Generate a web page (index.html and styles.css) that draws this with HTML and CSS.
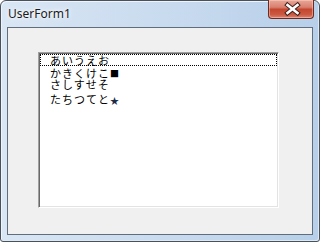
FILE: index.html
```html
<!DOCTYPE html>
<html lang="ja">
<head>
    <meta charset="UTF-8">
    <meta name="viewport" content="width=device-width, initial-scale=1.0">
    <title>UserForm1</title>

    <link rel="stylesheet" href="styles.css">
</head>
<body>
    <div class="window">
        <div class="titlebar">
            <span class="title">UserForm1</span>
            <button class="close" aria-label="Close">
                <svg width="46" height="19" viewBox="0 0 46 19">
                    <path d="M19.5 6 L29.5 14 M29.5 6 L19.5 14" stroke="#40201c" stroke-width="4.6" stroke-linecap="square" fill="none"/>
                    <path d="M19.5 6 L29.5 14 M29.5 6 L19.5 14" stroke="#fff" stroke-width="2.6" stroke-linecap="square" fill="none"/>
                </svg>
            </button>
        </div>

        <div class="client">
            <div class="listbox">
                <div class="item focused">あいうえお</div>
                <div class="item double">かきくけこ<span class="mark">■</span><br>さしすせそ</div>
                <div class="item">たちつてと<span class="star">★</span></div>
            </div>
        </div>
    </div>
</body>
</html>
```

FILE: styles.css
```css
* {
    box-sizing: border-box;
}

body {
    margin: 0;
    background: #fff;
}

.window {
    width: 320px;
    height: 242px;
    display: flex;
    flex-direction: column;
    padding: 0 6px 6px;
    border: 1px solid #4b5159;
    border-radius: 6px 6px 3px 3px;
    background: linear-gradient(to right, #d9e6f4, #c6d9ee 60%, #b7cfe9);
    box-shadow: inset 1px 1px #eef4fb, inset -1px -1px #dbe8f5;
}

.titlebar {
    height: 26px;
    flex: none;
    display: flex;
    justify-content: space-between;
    align-items: flex-start;
    padding-left: 1px;
    margin-right: -1px;
}

.title {
    font-family: "Noto Sans", sans-serif;
    font-size: 12px;
    line-height: 16px;
    margin-top: 5px;
    color: #1b1b1b;
    text-shadow: 0 0 6px #fff, 0 0 3px #fff;
}

.close {
    width: 46px;
    height: 19px;
    margin-top: -1px;
    padding: 0;
    border: 1px solid #6b2b22;
    border-top: none;
    border-radius: 0 0 4px 4px;
    background: linear-gradient(#e9a796, #d98070 40%, #c4472f 52%, #cb5840 80%, #dd8270);
    box-shadow: inset 0 0 0 1px rgba(255, 220, 210, 0.45);
    cursor: pointer;
}

.close svg {
    display: block;
    margin: -1px 0 0 -1px;
}

.client {
    flex: 1;
    display: flex;
    padding: 24px 33px 26px 30px;
    border: 1px solid #616d7a;
    background: #f0f0f0;
}

.listbox {
    flex: 1;
    background: #fff;
    border-top: 1px solid #a0a0a0;
    border-left: 1px solid #a0a0a0;
    border-bottom: 1px solid #fff;
    border-right: 1px solid #fff;
    box-shadow: inset 1px 1px #696969, inset -1px -1px #e3e3e3;
    padding: 1px;
    font-family: "Noto Sans CJK JP", "Noto Sans", sans-serif;
    font-size: 11px;
    letter-spacing: 1px;
    color: #000;
}

.item {
    line-height: 12px;
    padding-left: 10px;
}

.item.focused {
    height: 12px;
    padding-left: 9px;
    border: 1px dotted #000;
    line-height: 10px;
}

.item.double {
    padding-top: 2px;
    line-height: 10px;
    height: 27px;
}

.mark {
    font-size: 9px;
    vertical-align: 1px;
}

.star {
    color: #1c2a48;
    font-size: 9px;
}
```
